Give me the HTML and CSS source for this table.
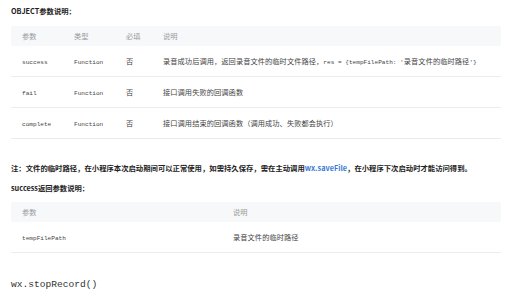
FILE: index.html
```html
<!DOCTYPE html>
<html lang="zh-CN">
<head>
    <meta charset="UTF-8">
    <meta name="viewport" content="width=device-width, initial-scale=1.0">
    <title>wx.startRecord</title>
    <link rel="stylesheet" href="styles.css">
</head>
<body>
<div class="doc">
    <p class="label">OBJECT参数说明：</p>
    <table class="params">
        <thead>
            <tr>
                <th class="col-name">参数</th>
                <th class="col-type">类型</th>
                <th class="col-req">必填</th>
                <th>说明</th>
            </tr>
        </thead>
        <tbody>
            <tr>
                <td><code>success</code></td>
                <td><code>Function</code></td>
                <td>否</td>
                <td>录音成功后调用，返回录音文件的临时文件路径，<code>res = {tempFilePath: '</code>录音文件的临时路径<code>'}</code></td>
            </tr>
            <tr>
                <td><code>fail</code></td>
                <td><code>Function</code></td>
                <td>否</td>
                <td>接口调用失败的回调函数</td>
            </tr>
            <tr>
                <td><code>complete</code></td>
                <td><code>Function</code></td>
                <td>否</td>
                <td>接口调用结束的回调函数（调用成功、失败都会执行）</td>
            </tr>
        </tbody>
    </table>

    <p class="note">注：文件的临时路径，在小程序本次启动期间可以正常使用，如需持久保存，需在主动调用<a href="#">wx.saveFile</a>，在小程序下次启动时才能访问得到。</p>

    <p class="label label-small">success返回参数说明：</p>
    <table class="params">
        <thead>
            <tr>
                <th class="col-wide">参数</th>
                <th>说明</th>
            </tr>
        </thead>
        <tbody>
            <tr>
                <td><code>tempFilePath</code></td>
                <td>录音文件的临时路径</td>
            </tr>
        </tbody>
    </table>

    <h3 class="api-name">wx.stopRecord()</h3>
</div>
</body>
</html>
```

FILE: styles.css
```css
body {
    margin: 0;
    background: #fff;
    font-family: "Noto Sans CJK SC", "Noto Sans", sans-serif;
    color: #333;
}
.doc {
    width: 490px;
    padding: 5px 19px 0 11px;
}
.label {
    margin: 0;
    font-size: 7.3px;
    line-height: 12px;
    font-weight: bold;
    color: #222;
}
.label-small {
    margin-top: 8px;
}
.params {
    width: 490px;
    margin-top: 9px;
    border-collapse: collapse;
    table-layout: fixed;
    font-size: 7.2px;
    color: #444;
}
.params + .note {
    margin-top: 23px;
}
.label-small + .params {
    margin-top: 8px;
}
.params th {
    height: 20px;
    padding: 0 0 0 11px;
    background: #f7f8fa;
    font-weight: normal;
    color: #999;
    text-align: left;
}
.params td {
    height: 30px;
    padding: 0 0 0 11px;
    border-bottom: 1px solid #ececec;
    letter-spacing: 0.1px;
}
.col-name {
    width: 41px;
}
.col-type {
    width: 41px;
}
.col-req {
    width: 26px;
}
.col-wide {
    width: 200px;
}
code {
    font-family: "Liberation Mono", monospace;
    font-size: 6.1px;
    letter-spacing: 0;
    color: #444;
}
.note {
    margin: 0;
    font-size: 7.35px;
    line-height: 12px;
    font-weight: bold;
    color: #222;
    white-space: nowrap;
}
.note a {
    color: #3c7bd6;
    text-decoration: none;
}
.api-name {
    margin: 25px 0 0;
    font-family: "Liberation Mono", monospace;
    font-size: 9.6px;
    line-height: 14px;
    font-weight: normal;
    color: #333;
}
```
